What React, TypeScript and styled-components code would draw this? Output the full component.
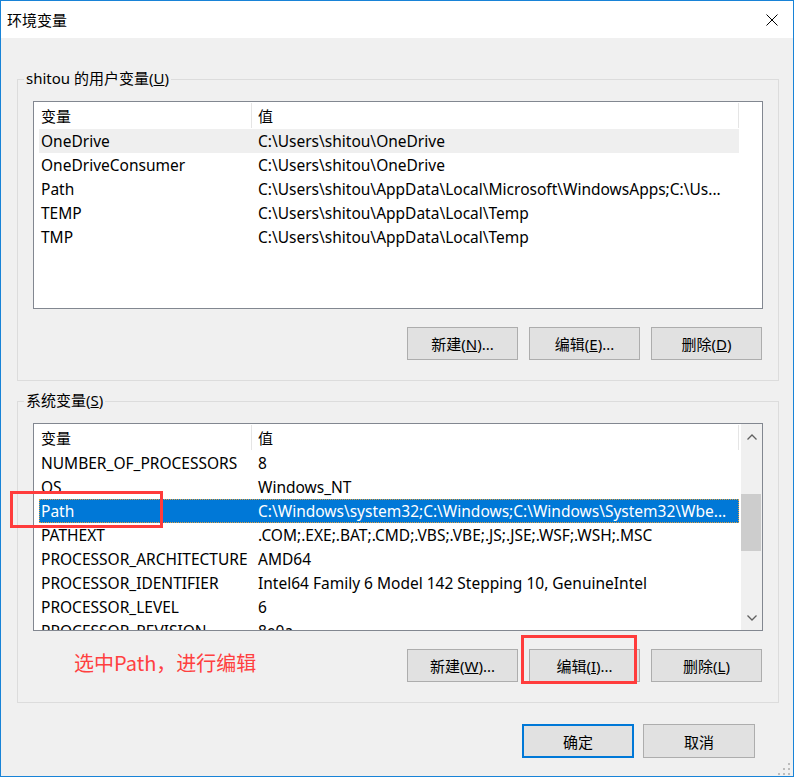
import styled, { createGlobalStyle } from 'styled-components';

const UI_FONT = `"Segoe UI", "Noto Sans", "Noto Sans CJK SC", sans-serif`;

const GlobalStyle = createGlobalStyle`
  html, body { margin: 0; padding: 0; background: #ffffff; }
  body { font-family: ${UI_FONT}; font-size: 15px; color: #000; }
  * { box-sizing: border-box; }
`;

const COL = { name: 213, value: 487 };

const Window = styled.div`
  position: relative;
  width: 794px;
  height: 777px;
  border: 1px solid #1883d7;
  background: #f0f0f0;
  display: flex;
  flex-direction: column;
  overflow: hidden;
`;

const TitleBar = styled.div`
  height: 37px;
  flex: none;
  background: #ffffff;
  display: flex;
  align-items: center;
  justify-content: space-between;
  padding: 0 15px 0 6px;
`;

const Title = styled.span`
  font-size: 15px;
  line-height: 20px;
`;

const Body = styled.div`
  flex: 1;
  display: flex;
  flex-direction: column;
  padding: 41px 14px 0 16px;
`;

const Group = styled.div<{ $gap?: number }>`
  position: relative;
  border: 1px solid #dcdcdc;
  padding: 21px 15px 20px;
  margin-top: ${(p) => p.$gap ?? 0}px;
`;

const Legend = styled.span`
  position: absolute;
  top: -12px;
  left: 6px;
  padding: 0 2px;
  line-height: 20px;
  background: #f0f0f0;
`;

const List = styled.div`
  height: 208px;
  border: 1px solid #828790;
  background: #ffffff;
  display: flex;
  overflow: hidden;
`;

const ListContent = styled.div`
  flex: 1;
  padding-left: 5px;
  display: flex;
  flex-direction: column;
  overflow: hidden;
`;

const Header = styled.div`
  height: 27px;
  flex: none;
  display: flex;
`;

const HeaderCell = styled.div<{ $w: number; $pad: number }>`
  width: ${(p) => p.$w}px;
  margin: 1px 0 1px;
  padding-left: ${(p) => p.$pad}px;
  border-right: 1px solid #e5e5e5;
  display: flex;
  align-items: center;
`;

const Row = styled.div<{ $state?: 'hover' | 'selected' }>`
  height: 24px;
  flex: none;
  display: flex;
  width: ${COL.name + COL.value}px;
  background: ${(p) =>
    p.$state === 'selected' ? '#0078d7' : p.$state === 'hover' ? '#efefef' : 'transparent'};
  color: ${(p) => (p.$state === 'selected' ? '#ffffff' : '#000000')};
  outline: ${(p) => (p.$state === 'selected' ? '1px dotted #e0a040' : 'none')};
  outline-offset: -1px;
`;

const Cell = styled.div<{ $w: number; $pad: number }>`
  width: ${(p) => p.$w}px;
  padding-left: ${(p) => p.$pad}px;
  font-size: 15.5px;
  line-height: 25px;
  white-space: nowrap;
  overflow: hidden;
  text-overflow: ellipsis;
`;

const ScrollBar = styled.div`
  width: 21px;
  flex: none;
  background: #f0f0f0;
  display: flex;
  flex-direction: column;
`;

const ScrollArrow = styled.div`
  height: 25px;
  display: flex;
  align-items: center;
  justify-content: center;
  color: #606060;
`;

const ScrollTrack = styled.div`
  flex: 1;
  padding: 45px 1px 0 0;
`;

const Thumb = styled.div`
  height: 57px;
  background: #cdcdcd;
`;

const ButtonRow = styled.div<{ $top: number; $gap: number; $right?: number }>`
  display: flex;
  justify-content: flex-end;
  gap: ${(p) => p.$gap}px;
  margin-top: ${(p) => p.$top}px;
  padding-right: ${(p) => p.$right ?? 0}px;
`;

const Button = styled.button<{ $default?: boolean; $w: number; $h: number }>`
  width: ${(p) => p.$w}px;
  height: ${(p) => p.$h}px;
  padding: 0;
  background: #e1e1e1;
  border: ${(p) => (p.$default ? '2px solid #0078d7' : '1px solid #adadad')};
  font-family: ${UI_FONT};
  font-size: 15px;
  color: #000;
`;

const Note = styled.div`
  position: absolute;
  left: 73px;
  top: 650px;
  font-family: "Noto Sans CJK SC", sans-serif;
  font-size: 20px;
  line-height: 24px;
  color: #ff4040;
`;

const RedBox = styled.div<{ $x: number; $y: number; $w: number; $h: number }>`
  position: absolute;
  left: ${(p) => p.$x}px;
  top: ${(p) => p.$y}px;
  width: ${(p) => p.$w}px;
  height: ${(p) => p.$h}px;
  border: 3px solid #ff3c3c;
`;

const Grip = styled.svg`
  position: absolute;
  right: 3px;
  bottom: 1px;
`;

type Var = { name: string; value: string; state?: 'hover' | 'selected' };

const userVars: Var[] = [
  { name: 'OneDrive', value: 'C:\\Users\\shitou\\OneDrive', state: 'hover' },
  { name: 'OneDriveConsumer', value: 'C:\\Users\\shitou\\OneDrive' },
  { name: 'Path', value: 'C:\\Users\\shitou\\AppData\\Local\\Microsoft\\WindowsApps;C:\\Us...' },
  { name: 'TEMP', value: 'C:\\Users\\shitou\\AppData\\Local\\Temp' },
  { name: 'TMP', value: 'C:\\Users\\shitou\\AppData\\Local\\Temp' },
];

const systemVars: Var[] = [
  { name: 'NUMBER_OF_PROCESSORS', value: '8' },
  { name: 'OS', value: 'Windows_NT' },
  { name: 'Path', value: 'C:\\Windows\\system32;C:\\Windows;C:\\Windows\\System32\\Wbe...', state: 'selected' },
  { name: 'PATHEXT', value: '.COM;.EXE;.BAT;.CMD;.VBS;.VBE;.JS;.JSE;.WSF;.WSH;.MSC' },
  { name: 'PROCESSOR_ARCHITECTURE', value: 'AMD64' },
  { name: 'PROCESSOR_IDENTIFIER', value: 'Intel64 Family 6 Model 142 Stepping 10, GenuineIntel' },
  { name: 'PROCESSOR_LEVEL', value: '6' },
  { name: 'PROCESSOR_REVISION', value: '8e0a' },
];

const Chevron = ({ down }: { down?: boolean }) => (
  <svg width="10" height="6" viewBox="0 0 10 6">
    <polyline
      points={down ? '0.5,0.5 5,5 9.5,0.5' : '0.5,5.5 5,1 9.5,5.5'}
      fill="none"
      stroke="currentColor"
      strokeWidth="1.3"
    />
  </svg>
);

const VarList = ({ rows, scroll }: { rows: Var[]; scroll?: boolean }) => (
  <List>
    <ListContent>
      <Header>
        <HeaderCell $w={COL.name} $pad={2}>变量</HeaderCell>
        <HeaderCell $w={COL.value} $pad={6}>值</HeaderCell>
      </Header>
      {rows.map((r) => (
        <Row key={r.name} $state={r.state}>
          <Cell $w={COL.name} $pad={2}>{r.name}</Cell>
          <Cell $w={COL.value} $pad={6}>{r.value}</Cell>
        </Row>
      ))}
    </ListContent>
    {scroll && (
      <ScrollBar>
        <ScrollArrow><Chevron /></ScrollArrow>
        <ScrollTrack><Thumb /></ScrollTrack>
        <ScrollArrow><Chevron down /></ScrollArrow>
      </ScrollBar>
    )}
  </List>
);

export default function App() {
  return (
    <>
      <GlobalStyle />
      <Window>
        <TitleBar>
          <Title>环境变量</Title>
          <svg width="12" height="12" viewBox="0 0 12 12">
            <path d="M0.5 0.5 L11.5 11.5 M11.5 0.5 L0.5 11.5" stroke="#000" strokeWidth="1" />
          </svg>
        </TitleBar>
        <Body>
          <Group>
            <Legend>shitou 的用户变量(<u>U</u>)</Legend>
            <VarList rows={userVars} />
            <ButtonRow $top={18} $gap={11} $right={1}>
              <Button $w={111} $h={33}>新建(<u>N</u>)...</Button>
              <Button $w={111} $h={33}>编辑(<u>E</u>)...</Button>
              <Button $w={111} $h={33}>删除(<u>D</u>)</Button>
            </ButtonRow>
          </Group>
          <Group $gap={20}>
            <Legend>系统变量(<u>S</u>)</Legend>
            <VarList rows={systemVars} scroll />
            <ButtonRow $top={18} $gap={11} $right={1}>
              <Button $w={111} $h={33}>新建(<u>W</u>)...</Button>
              <Button $w={111} $h={33}>编辑(<u>I</u>)...</Button>
              <Button $w={111} $h={33}>删除(<u>L</u>)</Button>
            </ButtonRow>
          </Group>
          <ButtonRow $top={21} $gap={9} $right={24}>
            <Button $w={112} $h={34} $default>确定</Button>
            <Button $w={112} $h={34}>取消</Button>
          </ButtonRow>
        </Body>
        <Note>选中Path，进行编辑</Note>
        <RedBox $x={9} $y={490} $w={153} $h={37} />
        <RedBox $x={520} $y={634} $w={116} $h={49} />
        <Grip width="12" height="12" viewBox="0 0 12 12">
          {[
            [10, 0],
            [5, 5],
            [10, 5],
            [0, 10],
            [5, 10],
            [10, 10],
          ].map(([x, y]) => (
            <rect key={`${x}-${y}`} x={x} y={y} width="2" height="2" fill="#bcbcbc" />
          ))}
        </Grip>
      </Window>
    </>
  );
}
